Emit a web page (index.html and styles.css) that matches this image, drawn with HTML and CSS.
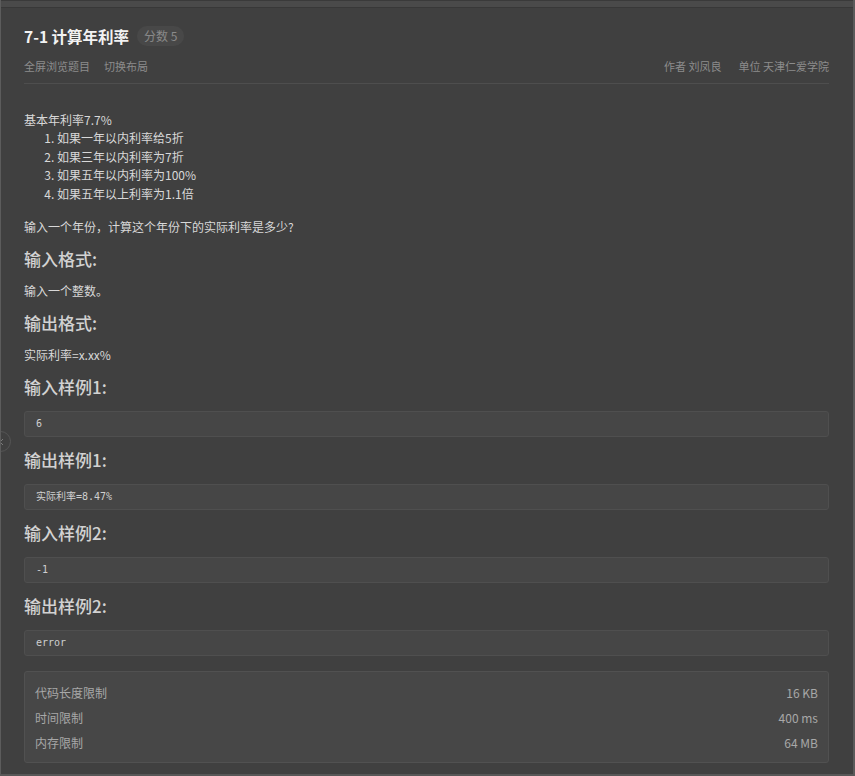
FILE: index.html
```html
<!DOCTYPE html>
<html lang="zh-CN">
<head>
<meta charset="utf-8">
<title>7-1 计算年利率</title>
<link rel="stylesheet" href="styles.css">
</head>
<body>
<div class="frame">
  <div class="topbar"></div>
  <div class="panel">
    <header class="head">
      <div class="title-row">
        <h1 class="title">7-1 计算年利率</h1>
        <span class="badge">分数 5</span>
      </div>
      <div class="meta-row">
        <div class="links">
          <span>全屏浏览题目</span>
          <span>切换布局</span>
        </div>
        <div class="info">
          <span>作者 刘凤良</span>
          <span>单位 天津仁爱学院</span>
        </div>
      </div>
    </header>

    <section class="content">
      <p class="text">基本年利率7.7%</p>
      <ol class="list">
        <li>如果一年以内利率给5折</li>
        <li>如果三年以内利率为7折</li>
        <li>如果五年以内利率为100%</li>
        <li>如果五年以上利率为1.1倍</li>
      </ol>
      <p class="text gap">输入一个年份，计算这个年份下的实际利率是多少?</p>

      <h3 class="sub">输入格式:</h3>
      <p class="text">输入一个整数。</p>

      <h3 class="sub">输出格式:</h3>
      <p class="text">实际利率=x.xx%</p>

      <h3 class="sub">输入样例1:</h3>
      <pre class="code">6</pre>

      <h3 class="sub">输出样例1:</h3>
      <pre class="code">实际利率=8.47%</pre>

      <h3 class="sub">输入样例2:</h3>
      <pre class="code">-1</pre>

      <h3 class="sub">输出样例2:</h3>
      <pre class="code">error</pre>

      <div class="limits">
        <div class="limit-row"><span>代码长度限制</span><span>16 KB</span></div>
        <div class="limit-row"><span>时间限制</span><span>400 ms</span></div>
        <div class="limit-row"><span>内存限制</span><span>64 MB</span></div>
      </div>
    </section>
  </div>
  <div class="collapse">
    <svg width="6" height="8" viewBox="0 0 6 8"><path d="M5 1 L2 4 L5 7" fill="none" stroke="#7a7a7a" stroke-width="1"/></svg>
  </div>
</div>
</body>
</html>
```
FILE: styles.css
```css
* { box-sizing: border-box; }
html, body {
  margin: 0;
  padding: 0;
  background: #404040;
}
body {
  font-family: "Noto Sans CJK SC", "Noto Sans", sans-serif;
  color: #d6d6d6;
  font-size: 12px;
}
.frame {
  position: relative;
  width: 855px;
  height: 776px;
  border-left: 1px solid #5c5c5c;
  border-right: 2px solid #5a5a5a;
  border-bottom: 2px solid #575757;
  background: #404040;
  overflow: hidden;
}
.topbar {
  height: 8px;
  border-top: 1px solid #3a3a3a;
  border-bottom: 1px solid #383838;
  background: #4a4a4a;
}
.panel {
  padding: 0 24px 0 23px;
}
.head {
  border-bottom: 1px solid #4e4e4e;
}
.title-row {
  display: flex;
  align-items: center;
  gap: 8px;
  height: 43px;
  padding-top: 13px;
}
.title {
  margin: 0;
  font-size: 15.5px;
  font-weight: 700;
  color: #f2f2f2;
  line-height: 22px;
}
.badge {
  height: 20px;
  line-height: 20px;
  padding: 0 7px;
  border-radius: 10px;
  background: #484848;
  color: #8a8a8a;
  font-size: 12px;
}
.meta-row {
  display: flex;
  justify-content: space-between;
  align-items: center;
  height: 32px;
  color: #8c8c8c;
  font-size: 11px;
  padding-bottom: 2px;
}
.links { display: flex; gap: 14px; }
.info { display: flex; gap: 17px; }

.content {
  padding-top: 26px;
}
.text {
  margin: 0;
  line-height: 19px;
  font-size: 12px;
  color: #d8d8d8;
}
.text.gap { margin-top: 13px; }
.list {
  margin: 0;
  padding-left: 33px;
  line-height: 18.7px;
  color: #d8d8d8;
}
.sub {
  margin: 11px 0 10px;
  font-size: 17px;
  font-weight: 500;
  line-height: 24px;
  color: #d2d2d2;
}
.code {
  margin: 0;
  height: 26px;
  line-height: 24px;
  padding: 0 11px;
  background: #464646;
  border: 1px solid #4f4f4f;
  border-radius: 3px;
  font-family: "DejaVu Sans Mono", "Noto Sans CJK SC", monospace;
  font-size: 10px;
  color: #cfcfcf;
}
.sub + .code { margin-top: 12px; }
.code + .sub { margin-top: 11px; }
.limits {
  margin-top: 15px;
  padding: 8px 10px 7px;
  background: #474747;
  border: 1px solid #515151;
  border-radius: 3px;
  color: #a8a8a8;
  font-size: 12px;
}
.limit-row {
  display: flex;
  justify-content: space-between;
  height: 25px;
  align-items: center;
}
.collapse {
  position: absolute;
  left: -11px;
  top: 431px;
  width: 21px;
  height: 21px;
  border: 1px solid #555555;
  border-radius: 50%;
  display: flex;
  align-items: center;
  justify-content: flex-end;
  padding-right: 6px;
}
```
